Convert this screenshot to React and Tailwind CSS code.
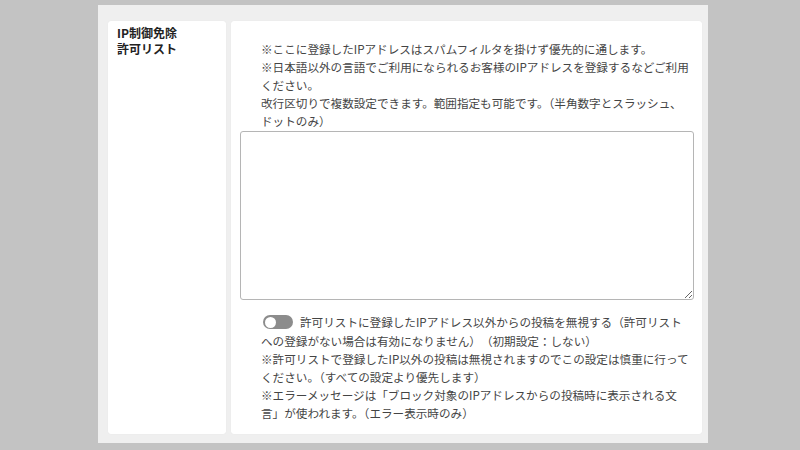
export default function App() {
  const font = { fontFamily: '"Noto Sans CJK JP", "Noto Sans", sans-serif' };

  return (
    <div className="w-[800px] h-[450px] bg-[#c3c3c3] overflow-hidden" style={font}>
      <div className="ml-[98px] mt-[5px] w-[610px] h-[438px] bg-[#efefef] pl-[10px] pt-[16px] pr-[6px] pb-[9px] flex gap-[5px]">
        {/* label column */}
        <div className="w-[118px] bg-white rounded-[3px] pl-[9px] pt-[4px] shadow-[0_0_1px_rgba(0,0,0,0.08)]">
          <div className="text-[12px] leading-[16px] font-bold text-[#222]">
            IP制御免除
            <br />
            許可リスト
          </div>
        </div>

        {/* field column */}
        <div className="flex-1 bg-white rounded-[3px] pt-[19px] pl-[9px] pr-[8px] shadow-[0_0_1px_rgba(0,0,0,0.08)]">
          <div className="pl-[21px] pr-[4px] text-[11.6px] leading-[18px] text-[#444]">
            <p>※ここに登録したIPアドレスはスパムフィルタを掛けず優先的に通します。</p>
            <p>※日本語以外の言語でご利用になられるお客様のIPアドレスを登録するなどご利用ください。</p>
            <p>改行区切りで複数設定できます。範囲指定も可能です。（半角数字とスラッシュ、ドットのみ）</p>
          </div>

          <textarea className="mt-[1px] block w-[454px] h-[169px] border border-[#b5b5b5] rounded-[3px] bg-white resize-y outline-none" />

          <div className="mt-[13px] pl-[21px] pr-[4px] text-[11.6px] leading-[18px] text-[#444]">
            <p>
              <span className="inline-flex align-middle ml-[2px] mr-[7px] mb-[3px] w-[30px] h-[14px] rounded-full bg-[#8c8c8c] items-center pl-[2px]">
                <span className="w-[11px] h-[11px] rounded-full bg-white" />
              </span>
              許可リストに登録したIPアドレス以外からの投稿を無視する（許可リストへの登録がない場合は有効になりません）　（初期設定：しない）
            </p>
            <p>※許可リストで登録したIP以外の投稿は無視されますのでこの設定は慎重に行ってください。（すべての設定より優先します）</p>
            <p>※エラーメッセージは「ブロック対象のIPアドレスからの投稿時に表示される文言」が使われます。（エラー表示時のみ）</p>
          </div>
        </div>
      </div>
    </div>
  );
}
